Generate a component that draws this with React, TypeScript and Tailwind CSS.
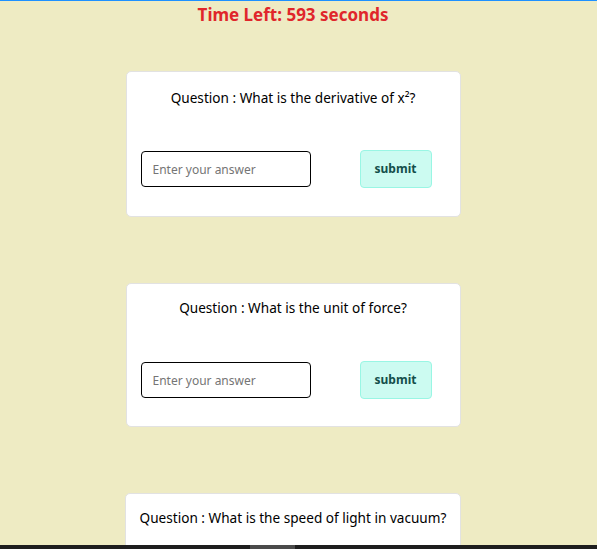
const questions = [
  { text: "Question : What is the derivative of x²?", sup: true },
  { text: "Question : What is the unit of force?", sup: false },
  { text: "Question : What is the speed of light in vacuum?", sup: false },
];

const QuestionCard = ({ text, sup }: { text: string; sup: boolean }) => {
  return (
    <div
      className={`mx-auto w-fit min-w-[335px] rounded-[5px] border border-[#e2e2e2] bg-white px-[14px] ${
        sup ? "pt-[15px] pb-[28px]" : "pt-[13px] pb-[27px]"
      }`}
    >
      <p className="text-center text-[13.6px] leading-[22px] text-black">{text}</p>
      <div className={`flex items-center ${sup ? "mt-[41px]" : "mt-[42px]"}`}>
        <input
          type="text"
          placeholder="Enter your answer"
          className="h-[36px] w-[170px] rounded-[4px] border border-black px-[11px] text-[12px] placeholder:text-[#757575] focus:outline-none"
        />
        <button className="ml-[49px] h-[38px] w-[72px] rounded-[4px] border border-[#99f6e4] bg-[#ccfbf1] text-[12px] font-bold text-[#134e4a]">
          submit
        </button>
      </div>
    </div>
  );
};

export default function App() {
  return (
    <div className="relative h-[549px] overflow-hidden border-t border-[#1e90ff] bg-[#eeebc3] font-['Noto_Sans',sans-serif]">
      <div className="w-[586px]">
        <h1 className="pt-[2px] text-center text-[17px] leading-[24px] font-bold text-[#e0262b]">
          Time Left: 593 seconds
        </h1>
        <div className="mt-[44px] flex flex-col gap-[66px]">
          {questions.map((q) => (
            <QuestionCard key={q.text} text={q.text} sup={q.sup} />
          ))}
        </div>
      </div>
      <div className="fixed bottom-0 left-0 flex h-[4px] w-full bg-[#1e1e1e]">
        <div className="ml-[250px] h-full w-[45px] bg-[#4a4a4a]"></div>
      </div>
    </div>
  );
}
